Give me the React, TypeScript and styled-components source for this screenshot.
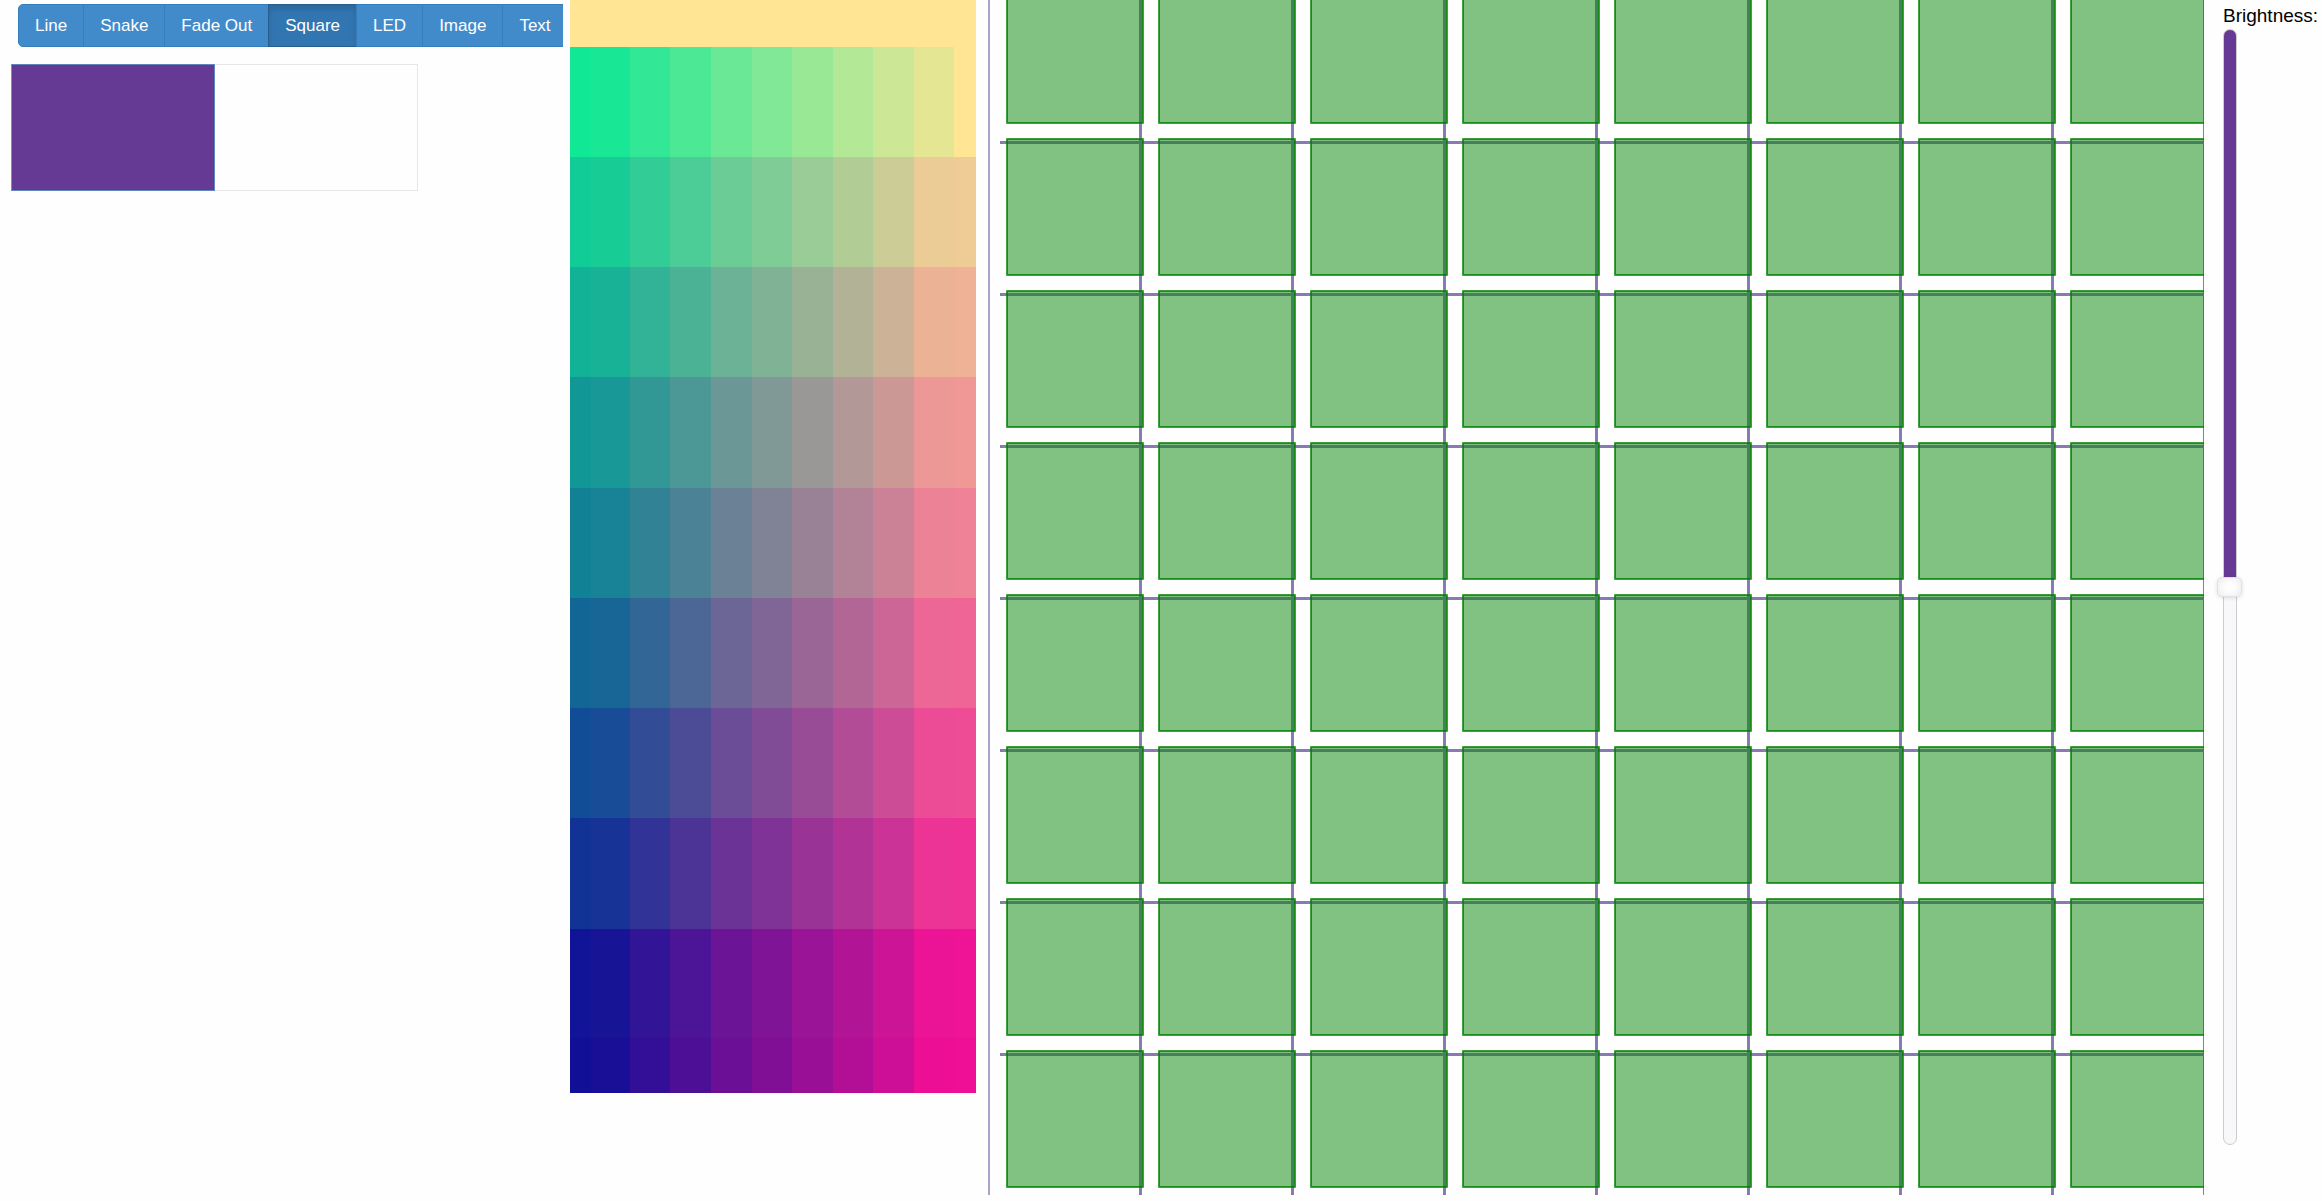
import React, { useState } from "react";
import styled, { createGlobalStyle } from "styled-components";

const GlobalStyle = createGlobalStyle`
  * { box-sizing: border-box; }
  html { height: 100%; }
  body {
    margin: 0;
    background: #fefefe;
    color: #000;
    font-family: "Liberation Sans", Arial, sans-serif;
    overflow: hidden;
  }
`;

const Page = styled.main`
  display: flex;
  align-items: flex-start;
  height: 100vh;
  overflow: hidden;
`;

const Sidebar = styled.section`
  flex: 0 0 563px;
  overflow: hidden;
  padding: 4px 0 0 11px;
`;

const ButtonGroup = styled.div`
  display: flex;
  width: max-content;
  padding-left: 7px;
`;

const ModeButton = styled.button<{ $active: boolean }>`
  height: 43px;
  margin: 0 0 0 -1px;
  padding: 0 16px;
  border: 1px solid ${(p) => (p.$active ? "#285e8e" : "#357ebd")};
  background: ${(p) => (p.$active ? "#3276b1" : "#428bca")};
  box-shadow: ${(p) => (p.$active ? "inset 0 4px 6px rgba(0, 0, 0, 0.125)" : "none")};
  color: #fff;
  font: 17px "Liberation Sans", Arial, sans-serif;
  white-space: nowrap;
  cursor: pointer;
  &:first-child {
    margin-left: 0;
    border-radius: 5px 0 0 5px;
  }
`;

const Swatches = styled.div`
  display: flex;
  width: 407px;
  height: 127px;
  margin-top: 17px;
`;

const Swatch = styled.button<{ $color: string; $selected?: boolean }>`
  flex: 1;
  padding: 0;
  border: 1px solid ${(p) => (p.$selected ? "#5f86bd" : "#e6e6e6")};
  border-left-color: ${(p) => (p.$selected ? "#8d86b8" : "transparent")};
  background: ${(p) => p.$color};
`;

const Palette = styled.div`
  flex: 0 0 406px;
  display: grid;
  grid-template-columns: 21px 39px 40px 41px 41px 40px 41px 40px 41px 40px 22px;
  grid-template-rows: 47px 110px 110px 110px 111px 110px 110px 110px 111px 109px 55px;
  margin-left: 7px;
`;

const PaletteCell = styled.button<{ $color: string }>`
  padding: 0;
  border: 0;
  background: ${(p) => p.$color};
`;

const Board = styled.div`
  flex: 1;
  min-width: 0;
  height: 1195px;
  margin-left: 12px;
  overflow: hidden;
  border-left: 2px solid #aca3cb;
  background:
    repeating-linear-gradient(to right, transparent 0 149px, #887ab2 149px 152px),
    linear-gradient(#fefefe, #fefefe) 0 0 / 10px 100% no-repeat,
    repeating-linear-gradient(to bottom, transparent 0 141px, #887ab2 141px 144px, transparent 144px 152px);
`;

const LedGrid = styled.div`
  display: grid;
  grid-template-columns: repeat(8, 138px);
  grid-auto-rows: 138px;
  gap: 14px;
  margin: -14px 0 0 16px;
`;

const Led = styled.button`
  padding: 0;
  border: 1px solid rgba(0, 128, 0, 0.5);
  border-radius: 1px;
  background: rgba(4, 132, 4, 0.5);
  box-shadow: inset 0 0 0 1px rgba(0, 128, 0, 0.8);
`;

const Brightness = styled.div`
  flex: 0 0 118px;
  display: flex;
  flex-direction: column;
  align-items: flex-start;
  padding: 5px 0 0 19px;
`;

const BrightnessLabel = styled.label`
  font-size: 19px;
  line-height: 22px;
  height: 24px;
`;

const Slider = styled.input<{ $value: number }>`
  appearance: none;
  writing-mode: vertical-lr;
  width: 14px;
  height: 1116px;
  margin: 0;
  border: 1px solid #ccc;
  border-radius: 7px;
  background: linear-gradient(to bottom, #663a94 ${(p) => p.$value}%, #f8f8fa ${(p) => p.$value}%);
  &::-webkit-slider-runnable-track {
    width: 12px;
    height: 100%;
  }
  &::-webkit-slider-thumb {
    appearance: none;
    width: 25px;
    height: 20px;
    margin-left: -7px;
    border: 1px solid #e0e0e8;
    border-radius: 5px;
    background: radial-gradient(#fefefe 30%, #f1f1f5 80%);
    box-shadow: 0 1px 4px rgba(0, 0, 0, 0.12);
  }
`;

const modes = ["Line", "Snake", "Fade Out", "Square", "LED", "Image", "Text"];
const reds = [17, 24, 50, 76, 107, 128, 153, 178, 204, 236, 239];
const greens = [230, 232, 204, 178, 152, 130, 102, 76, 51, 20, 15];

function cellColor(row: number, col: number) {
  if (row === 0 || (row === 1 && col === 10)) return "rgb(255, 229, 148)";
  if (row === 1 && col === 9) return "rgb(229, 230, 148)";
  return `rgb(${reds[col]}, ${greens[row]}, 150)`;
}

export default function App() {
  const [mode, setMode] = useState("Square");
  const [brightness, setBrightness] = useState(50);
  return (
    <Page>
      <GlobalStyle />
      <Sidebar>
        <ButtonGroup role="group" aria-label="Drawing mode">
          {modes.map((m) => (
            <ModeButton key={m} type="button" $active={m === mode} onClick={() => setMode(m)}>
              {m}
            </ModeButton>
          ))}
        </ButtonGroup>
        <Swatches>
          <Swatch type="button" aria-label="Primary color" $color="#643a94" $selected />
          <Swatch type="button" aria-label="Secondary color" $color="#fefefe" />
        </Swatches>
      </Sidebar>
      <Palette>
        {greens.map((_, row) =>
          reds.map((__, col) => (
            <PaletteCell
              key={`${row}-${col}`}
              type="button"
              aria-label={`Color ${row + 1}, ${col + 1}`}
              $color={cellColor(row, col)}
            />
          ))
        )}
      </Palette>
      <Board>
        <LedGrid>
          {Array.from({ length: 64 }, (_, i) => (
            <Led key={i} type="button" aria-label={`LED ${i + 1}`} />
          ))}
        </LedGrid>
      </Board>
      <Brightness>
        <BrightnessLabel htmlFor="brightness">Brightness:</BrightnessLabel>
        <Slider
          id="brightness"
          type="range"
          min={0}
          max={100}
          value={brightness}
          $value={brightness}
          onChange={(e) => setBrightness(Number(e.target.value))}
        />
      </Brightness>
    </Page>
  );
}
